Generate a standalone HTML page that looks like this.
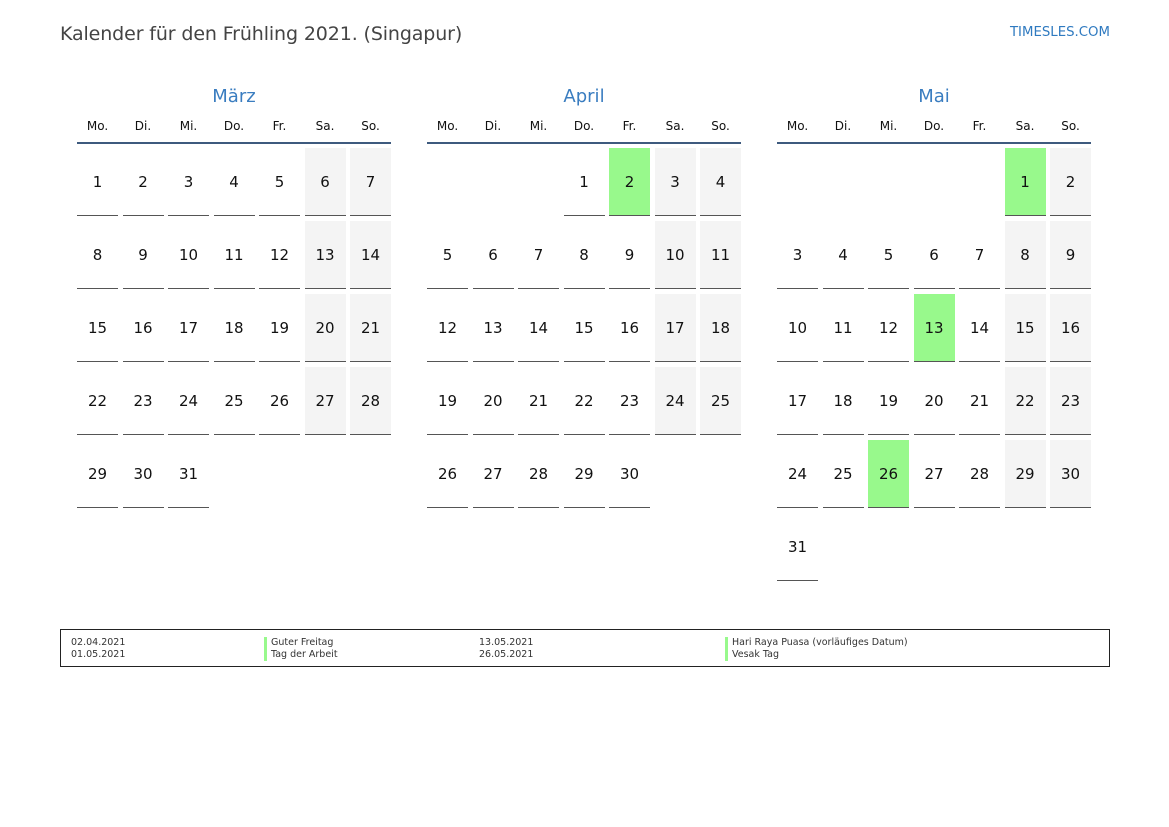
<!DOCTYPE html>
<html><head><meta charset="utf-8"><style>
*{margin:0;padding:0;box-sizing:border-box}
body{width:1169px;height:827px;background:#fff;font-family:"DejaVu Sans","Liberation Sans",sans-serif;position:relative;overflow:hidden;color:#111}
.title{position:absolute;left:60px;top:23px;font-size:19px;letter-spacing:-0.12px;color:#444}
.site{position:absolute;right:59px;top:25px;font-size:13.3px;color:#2f7ac0}
.m{position:absolute;top:86px;width:314px}
.mn{text-align:center;font-size:18px;color:#3a7dc0;height:22px;line-height:22px}
.dn{display:grid;grid-template-columns:repeat(7,41px);column-gap:4.5px;margin-top:10px;height:26px;border-bottom:2px solid #3e5a7e}
.dn div{text-align:center;font-size:12px;line-height:16px}
.g{display:grid;grid-template-columns:repeat(7,41px);column-gap:4.5px;row-gap:5px;grid-auto-rows:68px;margin-top:4px}
.g div{text-align:center;font-size:15px;line-height:68px;border-bottom:1.5px solid #555}
.g .e{border:none}
.g .w{background:#f4f4f4}
.g .h{background:#98f98c}
.leg{position:absolute;left:60px;top:629px;width:1050px;height:38px;border:1.5px solid #222;font-size:9.5px;color:#333}
.leg span{position:absolute;line-height:12px}
.bar{border-left:3px solid #98f98c;padding-left:4px}
</style></head><body>
<div class="title">Kalender für den Frühling 2021. (Singapur)</div>
<div class="site">TIMESLES.COM</div>

<div class="m" style="left:77px">
<div class="mn">März</div>
<div class="dn"><div>Mo.</div><div>Di.</div><div>Mi.</div><div>Do.</div><div>Fr.</div><div>Sa.</div><div>So.</div></div>
<div class="g">
<div>1</div><div>2</div><div>3</div><div>4</div><div>5</div><div class="w">6</div><div class="w">7</div>
<div>8</div><div>9</div><div>10</div><div>11</div><div>12</div><div class="w">13</div><div class="w">14</div>
<div>15</div><div>16</div><div>17</div><div>18</div><div>19</div><div class="w">20</div><div class="w">21</div>
<div>22</div><div>23</div><div>24</div><div>25</div><div>26</div><div class="w">27</div><div class="w">28</div>
<div>29</div><div>30</div><div>31</div>
</div></div>

<div class="m" style="left:427px">
<div class="mn">April</div>
<div class="dn"><div>Mo.</div><div>Di.</div><div>Mi.</div><div>Do.</div><div>Fr.</div><div>Sa.</div><div>So.</div></div>
<div class="g">
<div class="e"></div><div class="e"></div><div class="e"></div><div>1</div><div class="h">2</div><div class="w">3</div><div class="w">4</div>
<div>5</div><div>6</div><div>7</div><div>8</div><div>9</div><div class="w">10</div><div class="w">11</div>
<div>12</div><div>13</div><div>14</div><div>15</div><div>16</div><div class="w">17</div><div class="w">18</div>
<div>19</div><div>20</div><div>21</div><div>22</div><div>23</div><div class="w">24</div><div class="w">25</div>
<div>26</div><div>27</div><div>28</div><div>29</div><div>30</div>
</div></div>

<div class="m" style="left:777px">
<div class="mn">Mai</div>
<div class="dn"><div>Mo.</div><div>Di.</div><div>Mi.</div><div>Do.</div><div>Fr.</div><div>Sa.</div><div>So.</div></div>
<div class="g">
<div class="e"></div><div class="e"></div><div class="e"></div><div class="e"></div><div class="e"></div><div class="h">1</div><div class="w">2</div>
<div>3</div><div>4</div><div>5</div><div>6</div><div>7</div><div class="w">8</div><div class="w">9</div>
<div>10</div><div>11</div><div>12</div><div class="h">13</div><div>14</div><div class="w">15</div><div class="w">16</div>
<div>17</div><div>18</div><div>19</div><div>20</div><div>21</div><div class="w">22</div><div class="w">23</div>
<div>24</div><div>25</div><div class="h">26</div><div>27</div><div>28</div><div class="w">29</div><div class="w">30</div>
<div>31</div>
</div></div>

<div class="leg">
<span style="left:10px;top:7px">02.04.2021</span>
<span style="left:10px;top:19px">01.05.2021</span>
<span class="bar" style="left:203px;top:7px">Guter Freitag</span>
<span class="bar" style="left:203px;top:19px">Tag der Arbeit</span>
<span style="left:418px;top:7px">13.05.2021</span>
<span style="left:418px;top:19px">26.05.2021</span>
<span class="bar" style="left:664px;top:7px">Hari Raya Puasa (vorläufiges Datum)</span>
<span class="bar" style="left:664px;top:19px">Vesak Tag</span>
</div>
</body></html>
